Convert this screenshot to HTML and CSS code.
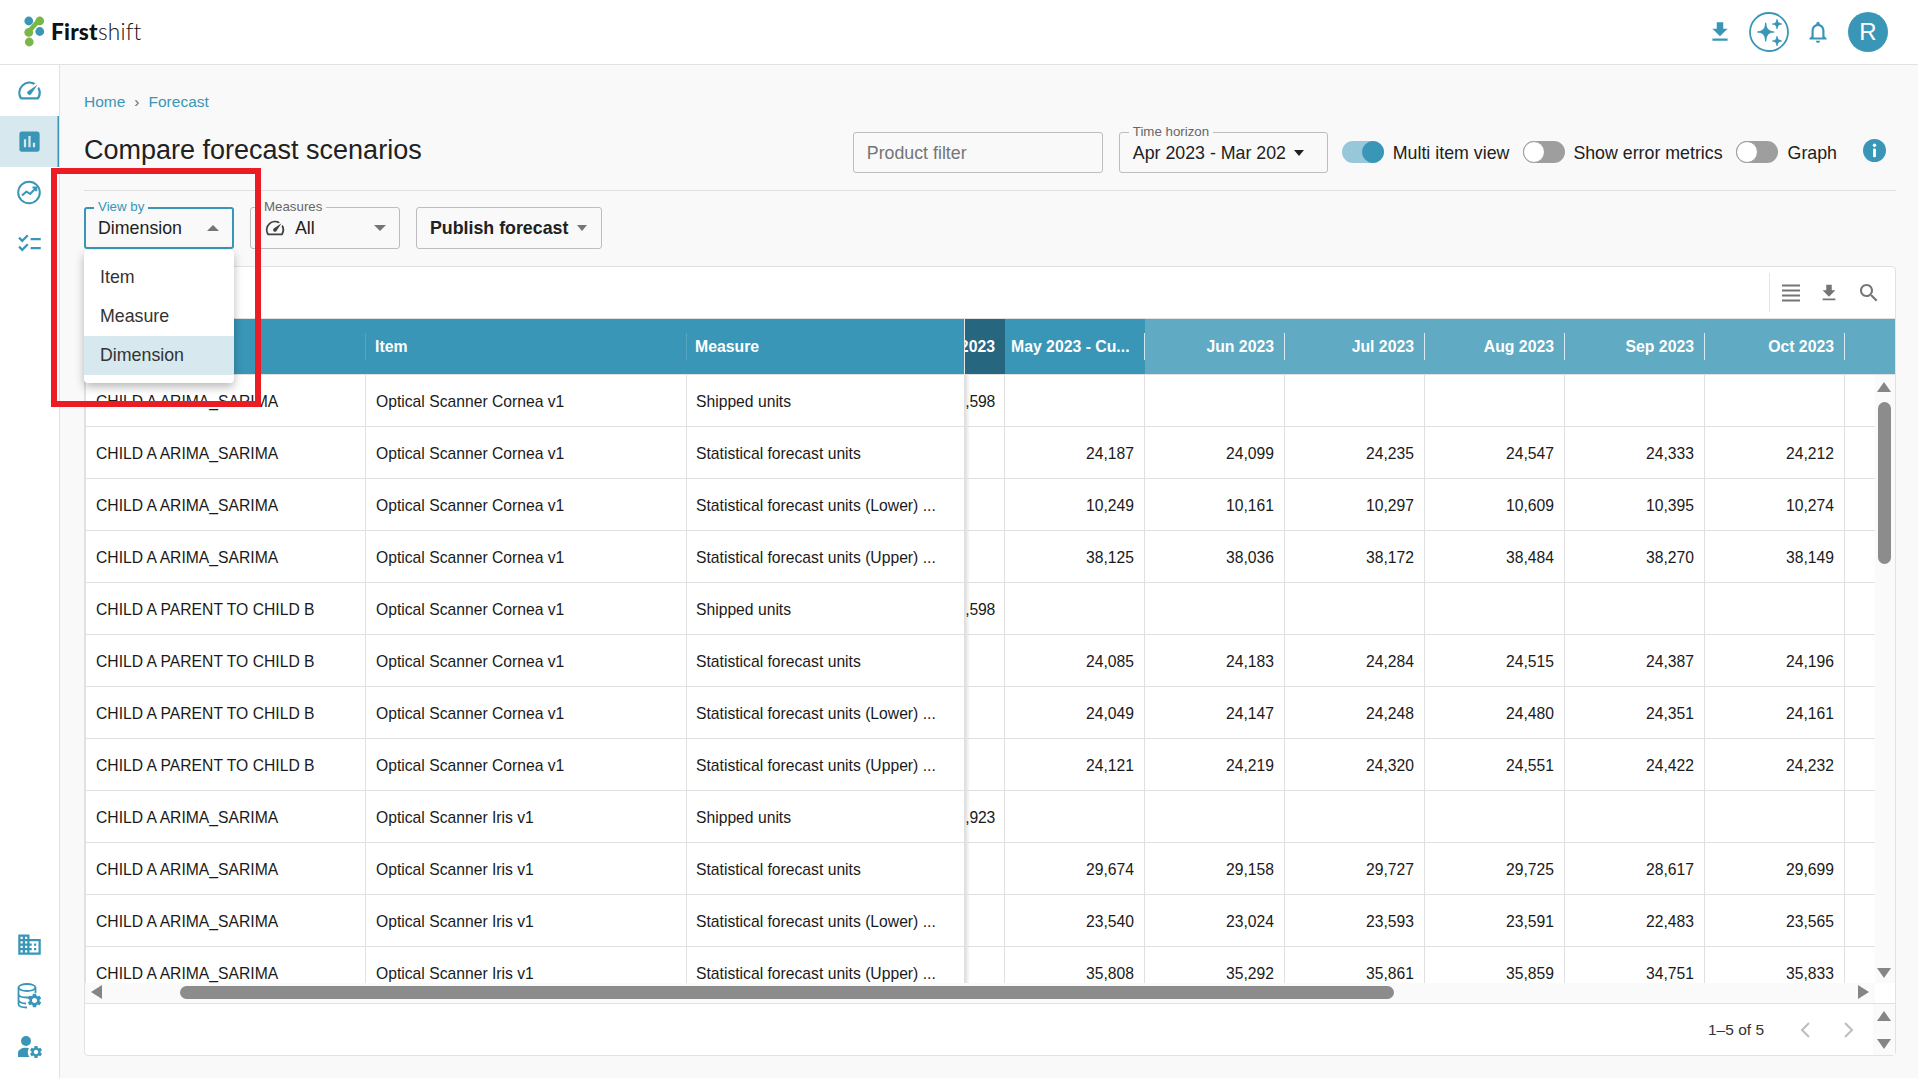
FILE: index.html
```html
<!DOCTYPE html>
<html lang="en">
<head>
<meta charset="utf-8">
<title>Firstshift - Compare forecast scenarios</title>
<link rel="stylesheet" href="styles.css">
</head>
<body>
<header class="top">
  <div class="logo">
    <svg class="logo-mark" viewBox="0 0 22 32">
      <path class="lg-line" d="M15 5 L5 16"/>
      <circle class="lb" cx="5" cy="5" r="4.6"/>
      <circle class="lg" cx="16.5" cy="5" r="4.6"/>
      <circle class="lg" cx="5" cy="17" r="4.6"/>
      <circle class="lb" cx="16.5" cy="16" r="4.6"/>
      <circle class="lg" cx="5.5" cy="27" r="4.6"/>
    </svg>
    <span class="logo-text"><b>First</b>shift</span>
  </div>
  <div class="top-icons">
    <svg class="ico ico-26" viewBox="0 0 24 24"><path d="M19 9h-4V3H9v6H5l7 7 7-7zM5 18v2h14v-2H5z"/></svg>
    <svg class="spark" viewBox="0 0 40 40">
      <circle class="spark-ring" cx="20" cy="20" r="19"/>
      <path d="M16.7 11 Q16.7 20 25 20 Q16.7 20 16.7 29 Q16.7 20 8.5 20 Q16.7 20 16.7 11Z" class="spark-star"/>
      <path d="M28 7.5 Q28 12 32.5 12 Q28 12 28 16.500 Q28 12 23.500 12 Q28 12 28 7.500Z" class="spark-star"/>
      <path d="M28 24.500 Q28 29 32.500 29 Q28 29 28 33.500 Q28 29 23.500 29 Q28 29 28 24.500Z" class="spark-star"/>
    </svg>
    <svg class="ico ico-26" viewBox="0 0 24 24"><path d="M12 22c1.100 0 2-.9 2-2h-4c0 1.100.9 2 2 2zm6-6v-5c0-3.070-1.640-5.640-4.500-6.320V4c0-.83-.67-1.500-1.500-1.500s-1.500.67-1.500 1.500v.68C7.630 5.360 6 7.920 6 11v5l-2 2v1h16v-1l-2-2zm-2 1H8v-6c0-2.480 1.510-4.500 4-4.500s4 2.020 4 4.500v6z"/></svg>
    <div class="avatar">R</div>
  </div>
</header>
<div class="main">
  <aside class="side">
    <div class="side-group">
      <div class="side-item"><svg class="ico ico-27" viewBox="0 0 24 24"><path d="M20.380 8.570l-1.230 1.850a8 8 0 0 1-.22 7.580H5.070A8 8 0 0 1 15.580 6.850l1.850-1.230A10 10 0 0 0 3.350 19a2 2 0 0 0 1.720 1h13.850a2 2 0 0 0 1.740-1 10 10 0 0 0-.27-10.440zm-9.790 6.840a2 2 0 0 0 2.830 0l5.660-8.490-8.490 5.660a2 2 0 0 0 0 2.830z"/></svg></div>
      <div class="side-item active"><svg class="ico ico-27" viewBox="0 0 24 24"><path d="M19 3H5c-1.100 0-2 .9-2 2v14c0 1.100.9 2 2 2h14c1.100 0 2-.9 2-2V5c0-1.100-.9-2-2-2zM9 17H7v-7h2v7zm4 0h-2V7h2v10zm4 0h-2v-4h2v4z"/></svg></div>
      <div class="side-item"><svg class="ico-line ico-27" viewBox="0 0 27 27"><circle cx="13" cy="13.500" r="10.800"/><path d="M6 16.500 L10.500 12.500 L14 15 L20 9 M16.500 8.500 H20.300 V12.300"/></svg></div>
      <div class="side-item"><svg class="ico ico-27" viewBox="0 0 24 24"><path d="M22 7h-9v2h9V7zm0 8h-9v2h9v-2zM5.540 11 2 7.460l1.410-1.410 2.120 2.120 4.240-4.240 1.410 1.410L5.540 11zm0 8L2 15.460l1.410-1.410 2.120 2.120 4.240-4.240 1.410 1.410L5.540 19z"/></svg></div>
    </div>
    <div class="side-group">
      <div class="side-item"><svg class="ico ico-27" viewBox="0 0 24 24"><path d="M12 7V3H2v18h20V7H12zM6 19H4v-2h2v2zm0-4H4v-2h2v2zm0-4H4V9h2v2zm0-4H4V5h2v2zm4 12H8v-2h2v2zm0-4H8v-2h2v2zm0-4H8V9h2v2zm0-4H8V5h2v2zm10 12h-8v-2h2v-2h-2v-2h2v-2h-2V9h8v10zm-2-8h-2v2h2v-2zm0 4h-2v2h2v-2z"/></svg></div>
      <div class="side-item"><svg class="ico-27" viewBox="0 0 27 27">
        <g class="db"><ellipse cx="11" cy="5.500" rx="8.500" ry="3.500"/><path d="M2.500 5.500 V22 C2.500 24 6 25.500 11 25.500 M2.500 12 C2.500 14 6 15.500 11 15.500 C13 15.500 15 15.200 16.500 14.600 M2.500 18 C2.500 20 6 21.500 10 21.500 M19.500 5.500 V11"/></g>
        <svg x="10" y="10" width="17" height="17" viewBox="0 0 24 24" class="ico"><path d="M19.140 12.940c.04-.3.06-.61.06-.94 0-.32-.02-.64-.07-.94l2.030-1.580a.49.49 0 0 0 .12-.61l-1.920-3.320a.488.488 0 0 0-.59-.22l-2.390.96c-.5-.38-1.030-.7-1.620-.94l-.36-2.540a.484.484 0 0 0-.48-.41h-3.840c-.24 0-.43.17-.47.41l-.36 2.540c-.59.24-1.130.57-1.620.94l-2.390-.96c-.22-.08-.47 0-.59.22L2.740 8.870c-.12.21-.08.47.12.61l2.030 1.580c-.05.3-.09.63-.09.94s.02.64.07.94l-2.030 1.580a.49.49 0 0 0-.12.61l1.920 3.320c.12.22.37.29.59.22l2.390-.96c.5.38 1.030.7 1.620.94l.36 2.540c.05.24.24.41.48.41h3.840c.24 0 .44-.17.47-.41l.36-2.540c.59-.24 1.130-.56 1.620-.94l2.390.96c.22.08.47 0 .59-.22l1.920-3.320c.12-.22.07-.47-.12-.61l-2.010-1.580zM12 15.600c-1.980 0-3.600-1.620-3.600-3.600s1.620-3.600 3.600-3.600 3.600 1.620 3.600 3.600-1.620 3.600-3.600 3.600z"/></svg>
      </svg></div>
      <div class="side-item"><svg class="ico-27" viewBox="0 0 27 27">
        <g class="ico"><circle cx="10" cy="8" r="5"/><path d="M2 24 V20 C2 16.500 6 14.500 11 14.800 C12 15 12.500 15 13 15.500 C11 18 11.500 21.500 13.500 24 Z"/></g>
        <svg x="12.500" y="11.500" width="15" height="15" viewBox="0 0 24 24" class="ico"><path d="M19.140 12.940c.04-.3.06-.61.06-.94 0-.32-.02-.64-.07-.94l2.030-1.580a.49.49 0 0 0 .12-.61l-1.920-3.320a.488.488 0 0 0-.59-.22l-2.390.96c-.5-.38-1.030-.7-1.620-.94l-.36-2.540a.484.484 0 0 0-.48-.41h-3.840c-.24 0-.43.17-.47.41l-.36 2.540c-.59.24-1.130.57-1.620.94l-2.390-.96c-.22-.08-.47 0-.59.22L2.740 8.870c-.12.21-.08.47.12.61l2.030 1.580c-.05.3-.09.63-.09.94s.02.64.07.94l-2.030 1.580a.49.49 0 0 0-.12.61l1.920 3.320c.12.22.37.29.59.22l2.390-.96c.5.38 1.030.7 1.620.94l.36 2.540c.05.24.24.41.48.41h3.840c.24 0 .44-.17.47-.41l.36-2.540c.59-.24 1.130-.56 1.620-.94l2.390.96c.22.08.47 0 .59-.22l1.920-3.320c.12-.22.07-.47-.12-.61l-2.010-1.580zM12 15.600c-1.980 0-3.600-1.620-3.600-3.600s1.620-3.600 3.600-3.600 3.600 1.620 3.600 3.600-1.620 3.600-3.600 3.600z"/></svg>
      </svg></div>
    </div>
  </aside>
  <main class="content">
    <nav class="crumbs"><span>Home</span><i>›</i><span>Forecast</span></nav>
    <div class="title-row">
      <h1>Compare forecast scenarios</h1>
      <div class="controls">
        <div class="field f-product"><span class="placeholder">Product filter</span></div>
        <div class="field f-time">
          <label class="float">Time horizon</label>
          <span class="val">Apr 2023 - Mar 202</span><span class="caret dark"></span>
        </div>
        <div class="toggle on"><span></span></div><span class="tlabel l1">Multi item view</span>
        <div class="toggle"><span></span></div><span class="tlabel l2">Show error metrics</span>
        <div class="toggle"><span></span></div><span class="tlabel l3">Graph</span>
        <svg class="info" viewBox="0 0 24 24"><circle cx="12" cy="12" r="12"/><rect class="info-i" x="10.500" y="10" width="3" height="9" rx="1"/><circle class="info-i" cx="12" cy="6.500" r="1.800"/></svg>
      </div>
    </div>
    <div class="filters">
      <div class="field f-view">
        <label class="float focus">View by</label>
        <span class="val">Dimension</span><span class="caret up"></span>
      </div>
      <div class="field f-meas">
        <label class="float">Measures</label>
        <svg class="meas-ico" viewBox="0 0 24 24"><path d="M20.380 8.570l-1.230 1.850a8 8 0 0 1-.22 7.580H5.070A8 8 0 0 1 15.580 6.850l1.850-1.230A10 10 0 0 0 3.350 19a2 2 0 0 0 1.720 1h13.850a2 2 0 0 0 1.740-1 10 10 0 0 0-.27-10.440zm-9.790 6.840a2 2 0 0 0 2.830 0l5.660-8.490-8.490 5.660a2 2 0 0 0 0 2.830z"/></svg>
        <span class="val">All</span><span class="caret"></span>
      </div>
      <div class="field f-pub"><span class="val strong">Publish forecast</span><span class="caret"></span></div>
    </div>
    <section class="card">
      <div class="toolbar">
        <div class="tools">
          <svg class="tool-list" viewBox="0 0 18 18"><path d="M0 1.500H18M0 6.500H18M0 11.500H18M0 16.500H18"/></svg>
          <svg class="tool-dl" viewBox="0 0 24 24"><path d="M19 9h-4V3H9v6H5l7 7 7-7zM5 18v2h14v-2H5z"/></svg>
          <svg class="tool-search" viewBox="0 0 24 24"><path d="M15.500 14h-.79l-.28-.27C15.410 12.590 16 11.110 16 9.500 16 5.910 13.090 3 9.500 3S3 5.910 3 9.500 5.910 16 9.500 16c1.610 0 3.090-.59 4.230-1.570l.27.28v.79l5 4.990L20.490 19l-4.990-5zm-6 0C7.010 14 5 11.990 5 9.500S7.010 5 9.500 5 14 7.010 14 9.500 11.990 14 9.500 14z"/></svg>
        </div>
      </div>
      <div class="grid-wrap">
        <div class="grid-clip">
          <table class="grid">
            <colgroup><col class="c-dim"><col class="c-item"><col class="c-meas"><col class="c-cut"><col class="c-m"><col class="c-m"><col class="c-m"><col class="c-m"><col class="c-m"><col class="c-m"><col class="c-end"></colgroup>
            <thead>
              <tr>
                <th class="tl"><span class="hs"></span></th><th class="tl"><span class="hs">Item</span></th><th class="tl frozen-h"><span class="hs">Measure</span></th>
                <th class="cut-h"><div class="cutbox">2023</div></th>
                <th class="cur tl"><span class="hs">May 2023 - Cu...</span></th>
                <th class="fut"><span class="hs">Jun 2023</span></th><th class="fut"><span class="hs">Jul 2023</span></th><th class="fut"><span class="hs">Aug 2023</span></th><th class="fut"><span class="hs">Sep 2023</span></th><th class="fut"><span class="hs">Oct 2023</span></th><th class="fut"></th>
              </tr>
            </thead>
            <tbody>
              <tr><td>CHILD A ARIMA_SARIMA</td><td>Optical Scanner Cornea v1</td><td class="fz">Shipped units</td><td class="n cutc">,598</td><td></td><td></td><td></td><td></td><td></td><td></td><td></td></tr>
              <tr><td>CHILD A ARIMA_SARIMA</td><td>Optical Scanner Cornea v1</td><td class="fz">Statistical forecast units</td><td class="n cutc"></td><td class="n">24,187</td><td class="n">24,099</td><td class="n">24,235</td><td class="n">24,547</td><td class="n">24,333</td><td class="n">24,212</td><td></td></tr>
              <tr><td>CHILD A ARIMA_SARIMA</td><td>Optical Scanner Cornea v1</td><td class="fz">Statistical forecast units (Lower) ...</td><td class="n cutc"></td><td class="n">10,249</td><td class="n">10,161</td><td class="n">10,297</td><td class="n">10,609</td><td class="n">10,395</td><td class="n">10,274</td><td></td></tr>
              <tr><td>CHILD A ARIMA_SARIMA</td><td>Optical Scanner Cornea v1</td><td class="fz">Statistical forecast units (Upper) ...</td><td class="n cutc"></td><td class="n">38,125</td><td class="n">38,036</td><td class="n">38,172</td><td class="n">38,484</td><td class="n">38,270</td><td class="n">38,149</td><td></td></tr>
              <tr><td>CHILD A PARENT TO CHILD B</td><td>Optical Scanner Cornea v1</td><td class="fz">Shipped units</td><td class="n cutc">,598</td><td></td><td></td><td></td><td></td><td></td><td></td><td></td></tr>
              <tr><td>CHILD A PARENT TO CHILD B</td><td>Optical Scanner Cornea v1</td><td class="fz">Statistical forecast units</td><td class="n cutc"></td><td class="n">24,085</td><td class="n">24,183</td><td class="n">24,284</td><td class="n">24,515</td><td class="n">24,387</td><td class="n">24,196</td><td></td></tr>
              <tr><td>CHILD A PARENT TO CHILD B</td><td>Optical Scanner Cornea v1</td><td class="fz">Statistical forecast units (Lower) ...</td><td class="n cutc"></td><td class="n">24,049</td><td class="n">24,147</td><td class="n">24,248</td><td class="n">24,480</td><td class="n">24,351</td><td class="n">24,161</td><td></td></tr>
              <tr><td>CHILD A PARENT TO CHILD B</td><td>Optical Scanner Cornea v1</td><td class="fz">Statistical forecast units (Upper) ...</td><td class="n cutc"></td><td class="n">24,121</td><td class="n">24,219</td><td class="n">24,320</td><td class="n">24,551</td><td class="n">24,422</td><td class="n">24,232</td><td></td></tr>
              <tr><td>CHILD A ARIMA_SARIMA</td><td>Optical Scanner Iris v1</td><td class="fz">Shipped units</td><td class="n cutc">,923</td><td></td><td></td><td></td><td></td><td></td><td></td><td></td></tr>
              <tr><td>CHILD A ARIMA_SARIMA</td><td>Optical Scanner Iris v1</td><td class="fz">Statistical forecast units</td><td class="n cutc"></td><td class="n">29,674</td><td class="n">29,158</td><td class="n">29,727</td><td class="n">29,725</td><td class="n">28,617</td><td class="n">29,699</td><td></td></tr>
              <tr><td>CHILD A ARIMA_SARIMA</td><td>Optical Scanner Iris v1</td><td class="fz">Statistical forecast units (Lower) ...</td><td class="n cutc"></td><td class="n">23,540</td><td class="n">23,024</td><td class="n">23,593</td><td class="n">23,591</td><td class="n">22,483</td><td class="n">23,565</td><td></td></tr>
              <tr><td>CHILD A ARIMA_SARIMA</td><td>Optical Scanner Iris v1</td><td class="fz">Statistical forecast units (Upper) ...</td><td class="n cutc"></td><td class="n">35,808</td><td class="n">35,292</td><td class="n">35,861</td><td class="n">35,859</td><td class="n">34,751</td><td class="n">35,833</td><td></td></tr>
            </tbody>
          </table>
        </div>
        <div class="hbar">
          <span class="tri t-left"></span>
          <span class="hthumb"></span>
          <span class="tri t-right"></span>
        </div>
        <div class="vbar">
          <span class="tri t-up"></span>
          <span class="vthumb"></span>
          <span class="tri t-down"></span>
        </div>
      </div>
      <footer class="pager">
        <span class="count">1–5 of 5</span>
        <svg class="chev" viewBox="0 0 12 18"><path d="M10 2 L3 9 L10 16"/></svg>
        <svg class="chev" viewBox="0 0 12 18"><path d="M2 2 L9 9 L2 16"/></svg>
        <div class="pager-bar"><span class="tri t-up"></span><span class="tri t-down"></span></div>
      </footer>
    </section>
    <ul class="menu">
      <li>Item</li>
      <li>Measure</li>
      <li class="sel">Dimension</li>
    </ul>
    <div class="redbox"></div>
  </main>
</div>
</body>
</html>
```
FILE: styles.css
```css
* { box-sizing: border-box; }
html, body { margin: 0; padding: 0; }
body {
  height: 100vh;
  overflow: hidden;
  display: flex;
  flex-direction: column;
  background: #f9f9f9;
  font-family: "Liberation Sans", Arial, sans-serif;
  color: #212121;
}
.top {
  height: 65px;
  flex: none;
  background: #fff;
  border-bottom: 1px solid #e2e2e2;
  display: flex;
  align-items: center;
  justify-content: space-between;
  padding: 0 30px 1px 24px;
}
.logo { display: flex; align-items: center; gap: 6px; }
.logo-mark { width: 21px; height: 31px; }
.lb { fill: #3a96b7; }
.lg { fill: #7ab648; }
.lg-line { stroke: #7ab648; stroke-width: 5; fill: none; }
.logo-text { font-family: Lato, sans-serif; font-weight: 300; font-size: 22.700px; color: #111; letter-spacing: .2px; }
.logo-text b { font-weight: 900; }
.top-icons { display: flex; align-items: center; }
.ico { fill: #3a96b7; display: block; }
.ico-26 { width: 26px; height: 26px; display: block; }
.ico-27 { width: 27px; height: 27px; display: block; }
.ico-line { fill: none; stroke: #3a96b7; stroke-width: 2; stroke-linejoin: round; }
.spark { width: 40px; height: 40px; margin: 0 16px 0 16.500px; display: block; }
.spark-ring { fill: none; stroke: #3a96b7; stroke-width: 1.800; }
.spark-star { fill: #3a96b7; stroke: #3a96b7; stroke-width: 1.200; stroke-linejoin: round; }
.avatar {
  width: 40px; height: 40px; margin-left: 17px;
  border-radius: 50%;
  background: #3a96b7;
  color: #fff;
  font-size: 24px;
  display: flex; align-items: center; justify-content: center;
}
.main { flex: 1; display: flex; min-height: 0; position: relative; }
.side {
  width: 60px; flex: none;
  background: #fff;
  border-right: 1px solid #e2e2e2;
  display: flex; flex-direction: column; justify-content: space-between;
  padding-bottom: 6px;
}
.side-item { height: 51px; display: flex; align-items: center; justify-content: center; }
.side-item.active { background: #d7e8ef; box-shadow: inset -1.500px 0 0 #3a96b7; }
.db { fill: none; stroke: #3a96b7; stroke-width: 1.800; }
.content { flex: 1; min-width: 0; padding: 26px 22px 22px 24px; display: flex; flex-direction: column; position: relative; }
.crumbs { height: 20px; display: flex; align-items: center; gap: 9px; font-size: 15.500px; color: #3a96b7; position: relative; top: 1px; }
.crumbs i { font-style: normal; color: #666; }
.title-row {
  margin-top: 21px;
  height: 59px;
  padding-bottom: 18px;
  border-bottom: 1px solid #e0e0e0;
  display: flex;
  justify-content: space-between;
  align-items: center;
}
h1 { margin: 0; font-weight: 400; font-size: 27px; color: #212121; position: relative; top: -2px; }
.controls { display: flex; align-items: center; }
.field {
  position: relative;
  height: 41px;
  border: 1px solid #bdbdbd;
  border-radius: 3px;
  display: flex;
  align-items: center;
  font-size: 17.800px;
}
.f-product { width: 250px; padding: 2px 0 0 13px; margin-right: 16px; }
.placeholder { color: #757575; }
.f-time { width: 209px; padding: 2px 0 0 13px; margin-right: 14px; }
.float {
  position: absolute;
  left: 9px; top: -8px;
  padding: 0 4px;
  background: #f9f9f9;
  font-size: 13.300px;
  line-height: 14px;
  color: #666;
}
.float.focus { color: #3a96b7; }
.caret {
  width: 0; height: 0;
  border-left: 6px solid transparent;
  border-right: 6px solid transparent;
  border-top: 6px solid #757575;
  margin-left: auto;
}
.caret.dark { border-top-color: #212121; border-left-width: 5.500px; border-right-width: 5.500px; margin: 0 21px 0 8px; }
.caret.up { border-top: 0; border-bottom: 6px solid #757575; margin-right: 13px; }
.toggle {
  width: 42px; height: 22px;
  flex: none;
  border-radius: 11px;
  background: #9e9e9e;
  position: relative;
  display: flex;
}
.toggle span {
  width: 22px; height: 22px;
  border-radius: 50%;
  background: #fff;
  border: 1px solid #9e9e9e;
}
.toggle.on { background: #97c8da; justify-content: flex-end; }
.toggle.on span { background: #3a96b7; border-color: #3a96b7; }
.tlabel { font-size: 17.800px; margin-left: 8px; margin-right: 13px; white-space: nowrap; position: relative; top: 1px; }
.tlabel.l1 { margin-left: 9px; margin-right: 14px; }
.tlabel.l3 { margin-left: 10px; margin-right: 26px; }
.info { width: 23px; height: 23px; margin-right: 10px; margin-top: -3px; fill: #3a96b7; display: block; }
.info-i { fill: #fff; }
.filters { margin-top: 16px; height: 42px; display: flex; gap: 16px; flex: none; }
.filters .field { height: 42px; }
.f-view { width: 150px; padding-left: 12px; border: 2px solid #3a96b7; border-radius: 3px; }
.f-view .float { left: 8px; top: -9px; }
.f-meas { width: 150px; padding-left: 13px; padding-right: 13px; }
.meas-ico { width: 22px; height: 22px; fill: #424242; margin-right: 9px; display: block; }
.f-pub { width: 186px; padding-left: 13px; padding-right: 14px; border-radius: 3px; }
.strong { font-weight: 700; font-size: 17.800px; white-space: nowrap; }
.f-pub .caret { border-left-width: 5.500px; border-right-width: 5.500px; }
.card {
  margin-top: 17px;
  flex: 1;
  min-height: 0;
  background: #fff;
  border: 1px solid #e2e2e2;
  border-radius: 4px;
  display: flex;
  flex-direction: column;
  position: relative;
}
.toolbar {
  height: 52px; flex: none;
  border-bottom: 1px solid #e0e0e0;
  display: flex; justify-content: flex-end;
  padding-top: 6px;
}
.tools {
  height: 39px;
  width: 126px;
  border-left: 1px solid #e5e5e5;
  display: flex; align-items: center;
  padding-left: 12px;
}
.tool-list { width: 18px; height: 18px; stroke: #757575; stroke-width: 1.800; fill: none; margin-right: 18px; display: block; }
.tool-dl { width: 22px; height: 22px; fill: #757575; margin-right: 17px; display: block; }
.tool-search { width: 24px; height: 24px; fill: #757575; display: block; }
.grid-wrap { flex: none; height: 684px; position: relative; overflow: hidden; }
.grid-clip { height: 664px; overflow: hidden; }
.grid {
  table-layout: fixed;
  border-collapse: separate;
  border-spacing: 0;
  width: 1810px;
  font-size: 15.700px;
  color: #1a1a1a;
}
.c-dim { width: 281px; }
.c-item { width: 321px; }
.c-meas { width: 278px; }
.c-cut { width: 40px; }
.c-m { width: 140px; }
.c-end { width: 50px; }
.grid th {
  height: 56px;
  padding: 0;
  background: #3a96b7;
  color: #fff;
  font-weight: 700;
  font-size: 15.800px;
  text-align: right;
  border-bottom: 1px solid #e0e0e0;
}
.grid th .hs {
  display: flex;
  align-items: center;
  justify-content: flex-end;
  height: 27px;
  padding: 0 10px 0 9px;
  border-right: 1px solid rgba(255,255,255,.75);
  white-space: nowrap;
}
.grid th.tl .hs { justify-content: flex-start; border-right-color: rgba(255,255,255,.15); padding-left: 9px; }
.grid th.cur { background: #3a96b7; }
.grid th.cur .hs { justify-content: flex-start; border-right-color: rgba(255,255,255,.75); padding-left: 6px; padding-right: 0; }
.grid th.fut { background: #60aac4; }
.grid th.frozen-h { border-right: 1px solid #e6e6e6; }
.grid th.frozen-h .hs { border-right: 0; padding-left: 8px; }
.grid th.cut-h { background: #26677f; }
.grid th.cut-h .cutbox { padding-right: 10px; }
.cutbox { display: flex; justify-content: flex-end; overflow: hidden; white-space: nowrap; }
.grid td {
  height: 52px;
  padding: 2px 10px 0;
  border-bottom: 1px solid #e0e0e0;
  border-right: 1px solid #e0e0e0;
  white-space: nowrap;
  overflow: hidden;
}
.grid td:first-child { border-left: 1px solid #e0e0e0; padding-left: 10px; }
.grid td.n { text-align: right; padding-right: 10px; padding-left: 0; }
.grid td.fz { padding-left: 9px; }
.grid td.cutc { padding-right: 9px; letter-spacing: -.2px; background: linear-gradient(to right, rgba(0,0,0,.13), rgba(0,0,0,0) 5px); }
.hbar {
  height: 20px;
  background: #fafafa;
  display: flex;
  align-items: center;
  margin-right: 20px;
  padding: 0 6px 2px;
}
.hthumb { display: block; width: 1214px; height: 13px; border-radius: 7px; background: #8c8c8c; margin-left: 78px; }
.vbar {
  position: absolute;
  right: 0; top: 56px; bottom: 20px;
  width: 20px;
  background: #fafafa;
  display: flex;
  flex-direction: column;
  align-items: center;
  padding: 7px 2px 0 0;
}
.vthumb { display: block; width: 13px; height: 162px; border-radius: 7px; background: #8c8c8c; margin-top: 10px; }
.vbar .t-down { margin-top: auto; margin-bottom: 5px; }
.tri { display: block; width: 0; height: 0; flex: none; }
.t-up { border-left: 7.500px solid transparent; border-right: 7.500px solid transparent; border-bottom: 10px solid #858585; }
.t-down { border-left: 7.500px solid transparent; border-right: 7.500px solid transparent; border-top: 10px solid #858585; }
.t-left { border-top: 7.500px solid transparent; border-bottom: 7.500px solid transparent; border-right: 11px solid #858585; }
.t-right { border-top: 7.500px solid transparent; border-bottom: 7.500px solid transparent; border-left: 11px solid #858585; margin-left: auto; }
.pager {
  flex: 1;
  border-top: 1px solid #e0e0e0;
  display: flex;
  align-items: center;
  position: relative;
  padding-left: 1623px;
}
.count { font-size: 15.500px; color: #333; width: 56px; white-space: nowrap; }
.chev { width: 12px; height: 18px; fill: none; stroke: #bdbdbd; stroke-width: 2; display: block; margin-left: 35px; }
.chev + .chev { margin-left: 32px; }
.pager-bar {
  position: absolute;
  right: 0; top: 0; bottom: 0;
  width: 22px;
  background: #fafafa;
  display: flex; flex-direction: column; align-items: center;
  justify-content: space-between;
  padding: 7px 0 6px;
}
.menu {
  position: absolute;
  left: 24px; top: 185px;
  width: 150px;
  margin: 0; padding: 8px 0;
  list-style: none;
  background: #fff;
  border-radius: 4px;
  box-shadow: 0 4px 10px rgba(0,0,0,.28);
  font-size: 17.800px;
  color: #333;
}
.menu li { height: 39px; display: flex; align-items: center; padding-left: 16px; }
.menu li.sel { background: #d7e8ef; }
.redbox {
  position: absolute;
  left: -9px; top: 103px;
  width: 210px; height: 239px;
  border: 6px solid #ec1c24;
  pointer-events: none;
}
```
